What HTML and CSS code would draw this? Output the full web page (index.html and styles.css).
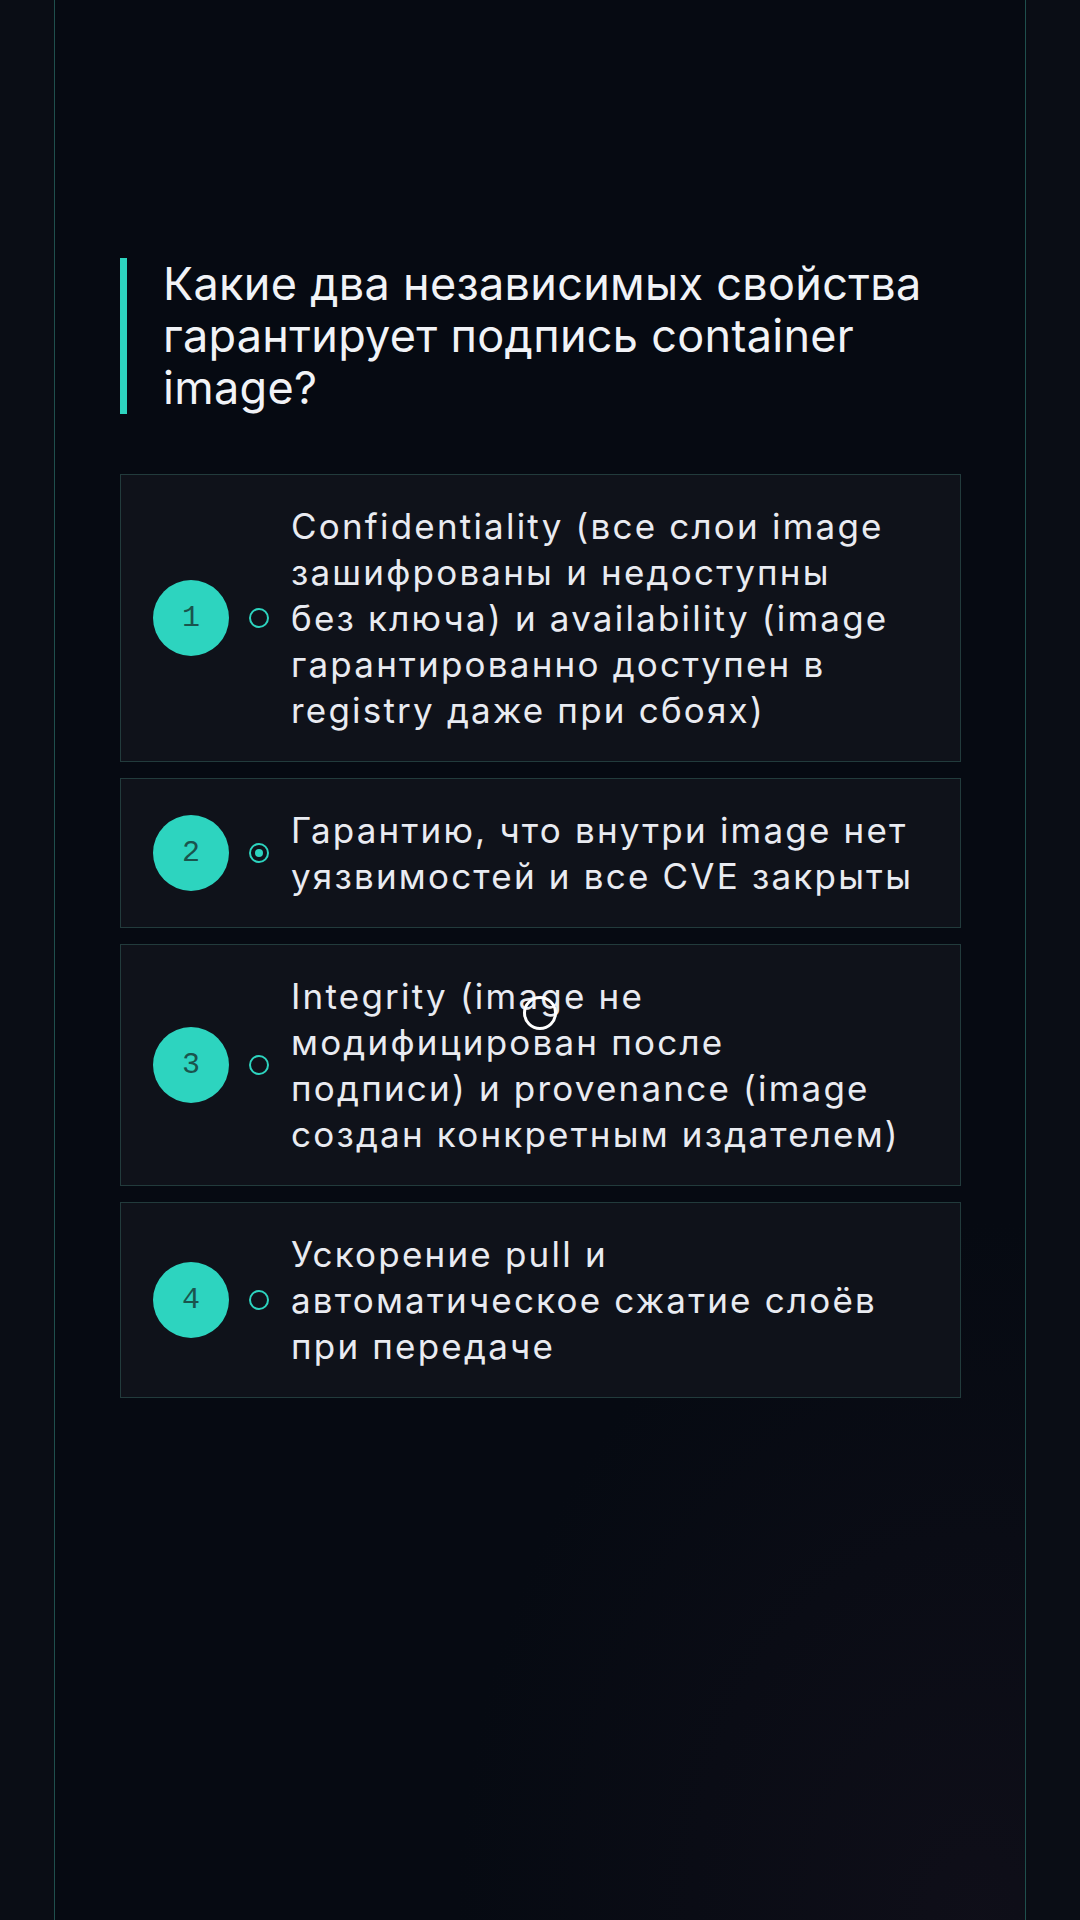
FILE: index.html
```html
<!DOCTYPE html>
<html lang="ru">
<head>
<meta charset="utf-8">
<title>Вопрос</title>
<link rel="stylesheet" href="styles.css">
</head>
<body>
<div class="frame">
  <main class="quiz">
    <h1 class="question">Какие два независимых свойства гарантирует подпись container image?</h1>
    <ul class="options">
      <li class="option">
        <span class="num">1</span>
        <span class="radio"></span>
        <span class="label">Confidentiality (все слои image<br>зашифрованы и недоступны<br>без ключа) и availability (image<br>гарантированно доступен в<br>registry даже при сбоях)</span>
      </li>
      <li class="option">
        <span class="num">2</span>
        <span class="radio radio-on"></span>
        <span class="label">Гарантию, что внутри image нет<br>уязвимостей и все CVE закрыты</span>
      </li>
      <li class="option">
        <span class="num">3</span>
        <span class="radio"></span>
        <span class="label">Integrity (image не<br>модифицирован после<br>подписи) и provenance (image<br>создан конкретным издателем)</span>
      </li>
      <li class="option">
        <span class="num">4</span>
        <span class="radio"></span>
        <span class="label">Ускорение pull и<br>автоматическое сжатие слоёв<br>при передаче</span>
      </li>
    </ul>
  </main>
</div>
<div class="cursor"></div>
</body>
</html>
```

FILE: styles.css
```css
* { box-sizing: border-box; }

html, body {
  margin: 0;
  padding: 0;
}

body {
  position: relative;
  width: 1080px;
  height: 1920px;
  overflow: hidden;
  background: #0a0d15;
  font-family: "Inter", "Liberation Sans", sans-serif;
  color: #eceef3;
}

.frame {
  margin: 0 54px;
  height: 1920px;
  border-left: 1px solid #1f4f4d;
  border-right: 1px solid #1f4f4d;
  background:
    radial-gradient(ellipse 520px 700px at 95% 100%, rgba(22, 18, 30, 0.55), rgba(10, 12, 20, 0) 100%),
    #060a12;
  padding: 258px 64px 0 65px;
}

.question {
  margin: 0;
  border-left: 7px solid #2dd4bf;
  padding-left: 36px;
  font-size: 45px;
  font-weight: 400;
  line-height: 52px;
  color: #f1f3f7;
  letter-spacing: 0.3px;
}

.options {
  list-style: none;
  margin: 60px 0 0;
  padding: 0;
  display: flex;
  flex-direction: column;
  gap: 16px;
}

.option {
  display: flex;
  align-items: center;
  padding: 28px 20px 28px 32px;
  border: 1px solid #223b3c;
  background: #0f121a;
}

.num {
  flex: 0 0 76px;
  width: 76px;
  height: 76px;
  border-radius: 50%;
  background: #2dd4bf;
  display: flex;
  align-items: center;
  justify-content: center;
  font-family: "Liberation Mono", monospace;
  font-size: 30px;
  font-weight: 400;
  color: #1a544d;
}

.radio {
  flex: 0 0 20px;
  width: 20px;
  height: 20px;
  margin: 0 22px 0 20px;
  border: 2px solid #2dd4bf;
  border-radius: 50%;
  display: flex;
  align-items: center;
  justify-content: center;
}

.radio-on::after {
  content: "";
  width: 8px;
  height: 8px;
  border-radius: 50%;
  background: #2dd4bf;
}

.label {
  flex: 1 1 auto;
  font-size: 35px;
  line-height: 46px;
  letter-spacing: 2.2px;
  white-space: nowrap;
  color: #e9ebf1;
}

.cursor {
  position: absolute;
  left: 523px;
  top: 996px;
  width: 34px;
  height: 34px;
  border: 3.5px solid #ffffff;
  border-radius: 50%;
}
```
